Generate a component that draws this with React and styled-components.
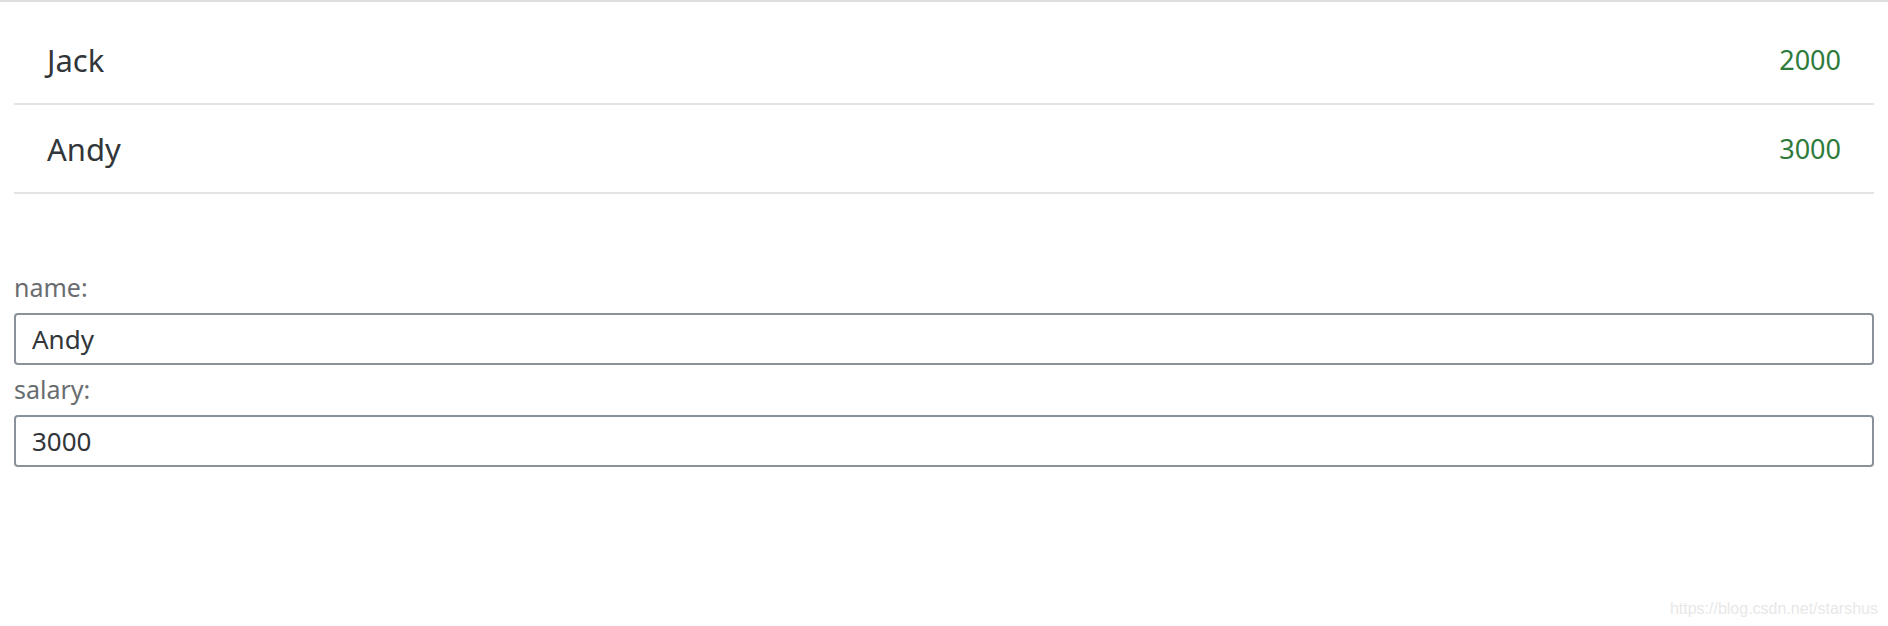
import React from "react";
import styled, { createGlobalStyle } from "styled-components";

const Global = createGlobalStyle`
  html, body { margin: 0; padding: 0; background: #ffffff; }
  body { font-family: "Noto Sans", "Open Sans", sans-serif; }
`;

const Page = styled.div`
  position: relative;
  height: 626px;
  border-top: 2px solid #dedede;
  box-sizing: border-box;
  padding: 14px 14px 0;
`;

const List = styled.ul`
  list-style: none;
  margin: 0;
  padding: 0;
`;

const Row = styled.li`
  display: flex;
  align-items: center;
  justify-content: space-between;
  height: 89px;
  box-sizing: border-box;
  padding: 0 33px;
  border-bottom: 2px solid #e4e4e4;
`;

const Name = styled.span`
  font-size: 31px;
  color: #32363a;
`;

const Salary = styled.span`
  font-size: 27px;
  color: #2f7b3c;
`;

const Form = styled.form`
  display: flex;
  flex-direction: column;
  margin-top: 69px;
`;

const Label = styled.label`
  display: flex;
  align-items: center;
  height: 50px;
  padding-bottom: 2px;
  box-sizing: border-box;
  font-size: 25px;
  color: #6a6d70;
`;

const Input = styled.input`
  height: 52px;
  box-sizing: border-box;
  width: 100%;
  margin: 0;
  padding: 0 16px;
  border: 2px solid #89919a;
  border-radius: 4px;
  font-family: "Noto Sans", "Open Sans", sans-serif;
  font-size: 26px;
  color: #32363a;
  background: #ffffff;
  outline: none;
`;

const Watermark = styled.div`
  position: absolute;
  right: 10px;
  bottom: 8px;
  font-family: "Liberation Sans", Arial, sans-serif;
  font-size: 16px;
  color: #e8e8e8;
`;

const people = [
  { name: "Jack", salary: 2000 },
  { name: "Andy", salary: 3000 },
];

export default function App() {
  return (
    <>
      <Global />
      <Page>
        <List>
          {people.map((p) => (
            <Row key={p.name}>
              <Name>{p.name}</Name>
              <Salary>{p.salary}</Salary>
            </Row>
          ))}
        </List>
        <Form onSubmit={(e) => e.preventDefault()}>
          <Label htmlFor="name">name:</Label>
          <Input id="name" defaultValue="Andy" />
          <Label htmlFor="salary">salary:</Label>
          <Input id="salary" defaultValue="3000" />
        </Form>
        <Watermark>https://blog.csdn.net/starshus</Watermark>
      </Page>
    </>
  );
}
